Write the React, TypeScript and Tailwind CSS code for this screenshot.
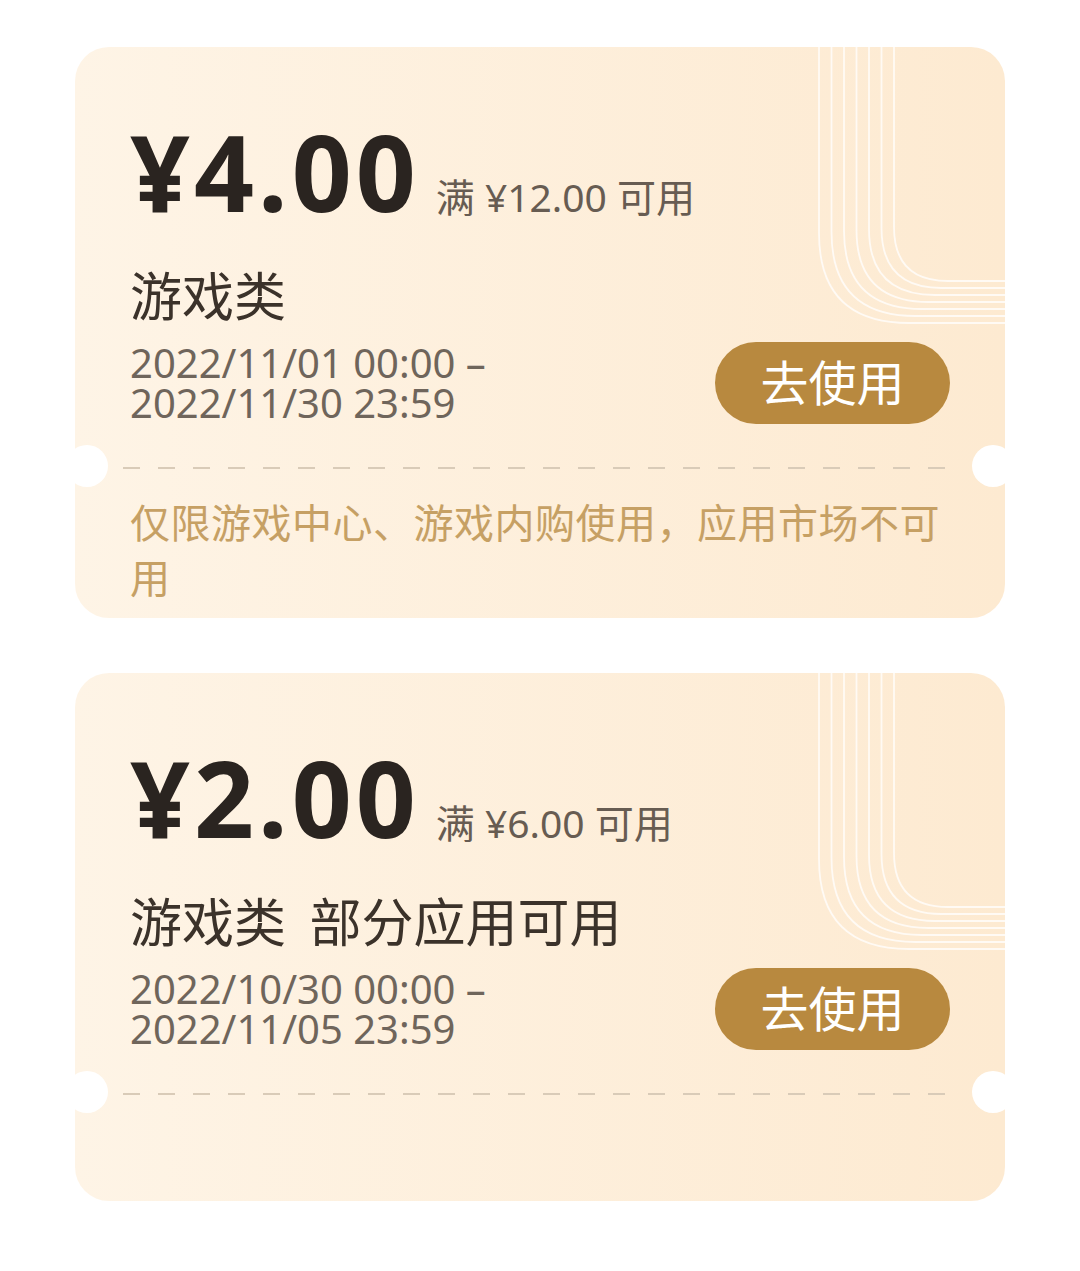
import React from "react"

interface CouponProps {
  amount: string
  threshold: string
  title: string
  start: string
  end: string
  note?: string
}

const coupons: CouponProps[] = [
  {
    amount: "¥4.00",
    threshold: "满 ¥12.00 可用",
    title: "游戏类",
    start: "2022/11/01 00:00 –",
    end: "2022/11/30 23:59",
    note: "仅限游戏中心、游戏内购使用，应用市场不可用",
  },
  {
    amount: "¥2.00",
    threshold: "满 ¥6.00 可用",
    title: "游戏类 部分应用可用",
    start: "2022/10/30 00:00 –",
    end: "2022/11/05 23:59",
  },
]

function Deco() {
  const lines = [0, 1, 2, 3, 4, 5, 6]
  return (
    <svg className="absolute top-0 right-0" width="190" height="300" viewBox="0 0 190 300" fill="none">
      {lines.map((i) => {
        const x = 4 + i * 12.5
        const y = 276 - i * 7
        const r = 90 - i * 6
        return (
          <path
            key={i}
            d={`M${x} 0 V${y - r} Q${x} ${y} ${x + r} ${y} H190`}
            stroke="#ffffff"
            strokeOpacity="0.75"
            strokeWidth="1.8"
          />
        )
      })}
    </svg>
  )
}

function Coupon({ amount, threshold, title, start, end, note }: CouponProps) {
  return (
    <div className="relative overflow-hidden rounded-[34px] bg-linear-to-r from-[#fef4e6] to-[#fdead1]">
      <Deco />

      {/* side notches */}
      <div className="absolute left-[-9px] top-[398px] w-[42px] h-[42px] rounded-full bg-white" />
      <div className="absolute right-[-9px] top-[398px] w-[42px] h-[42px] rounded-full bg-white" />

      <div className="relative px-[55px] pt-[72px]">
        <div className="flex items-baseline">
          <span className="text-[105px] font-bold leading-none text-[#2a2420] tracking-[4px]">{amount}</span>
          <span className="ml-[16px] text-[39px] leading-none text-[#675c52]">{threshold}</span>
        </div>

        <p className="mt-[41px] text-[52px] leading-[62px] text-[#3b322a] [word-spacing:10px]">{title}</p>

        <div className="mt-[15px] flex items-center justify-between">
          <div className="text-[40px] leading-[40px] text-[#6f655b]">
            <p>{start}</p>
            <p>{end}</p>
          </div>
          <button className="w-[235px] h-[82px] rounded-full bg-[#b8893f] text-white text-[48px] leading-none">
            去使用
          </button>
        </div>
      </div>

      <div className="relative mt-[43px] mx-[48px] h-[2px] bg-[repeating-linear-gradient(to_right,#d9cbb8_0_17px,transparent_17px_35px)]" />

      <div className="relative px-[55px] pt-[26px] pb-[13px] min-h-[106px]">
        {note && <p className="text-[40px] leading-[55px] tracking-[0.5px] text-[#c6a064]">{note}</p>}
      </div>
    </div>
  )
}

export default function App() {
  return (
    <div
      className="min-h-[1271px] bg-white px-[75px] pt-[47px] flex flex-col gap-[55px]"
      style={{ fontFamily: '"Noto Sans", "Noto Sans CJK SC", sans-serif' }}
    >
      {coupons.map((c) => (
        <Coupon key={c.amount} {...c} />
      ))}
    </div>
  )
}
